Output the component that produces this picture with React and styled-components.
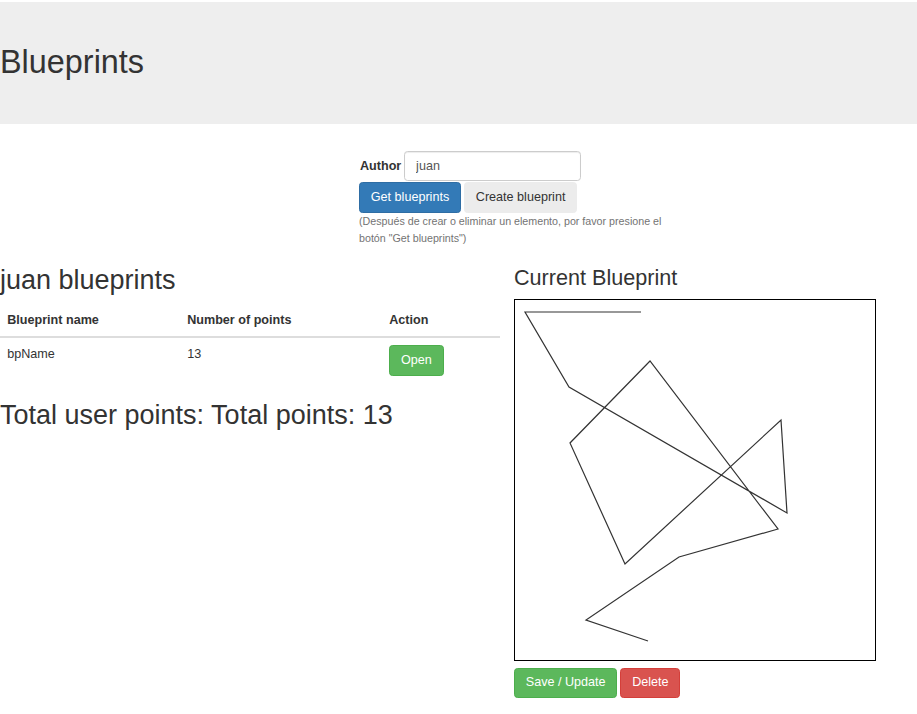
import styled, { createGlobalStyle } from 'styled-components';

const GlobalStyle = createGlobalStyle`
  body {
    margin: 0;
    padding-top: 2px;
    font-family: "Liberation Sans", Arial, sans-serif;
    font-size: 12.6px;
    line-height: 18px;
    color: #333;
    background: #fff;
  }
`;

const Jumbotron = styled.header`
  background: #eee;
  padding: 43px 0 43px;
`;

const Title = styled.h1`
  margin: 0;
  font-size: 32.4px;
  line-height: 1.1;
  font-weight: 500;
`;

const AuthorForm = styled.form`
  margin: 27px 0 0 359px;
  width: 315px;
`;

const InlineRow = styled.div`
  display: flex;
  align-items: center;
  gap: 3px;
  margin-bottom: ${(p) => p.$gap || 0}px;
`;

const Label = styled.label`
  font-weight: bold;
  padding-left: 1px;
`;

const Input = styled.input`
  box-sizing: border-box;
  width: 177px;
  height: 30.6px;
  padding: 5px 10.8px;
  font: inherit;
  color: #555;
  border: 1px solid #ccc;
  border-radius: 3.6px;
  box-shadow: inset 0 1px 1px rgba(0, 0, 0, 0.075);
`;

const variants = {
  primary: { bg: '#337ab7', border: '#2e6da4', color: '#fff' },
  success: { bg: '#5cb85c', border: '#4cae4c', color: '#fff' },
  danger: { bg: '#d9534f', border: '#d43f3a', color: '#fff' },
  light: { bg: '#ececec', border: '#ececec', color: '#333' },
};

const Button = styled.button`
  box-sizing: border-box;
  height: 30.6px;
  padding: 4px 10.8px 6px;
  font: inherit;
  line-height: 18px;
  border-radius: 3.6px;
  cursor: pointer;
  background: ${(p) => variants[p.$variant].bg};
  border: 1px solid ${(p) => variants[p.$variant].border};
  color: ${(p) => variants[p.$variant].color};
`;

const Help = styled.p`
  margin: 0;
  font-size: 10.7px;
  line-height: 17.6px;
  color: #737373;
`;

const Main = styled.main`
  display: flex;
  gap: 14px;
`;

const Column = styled.section`
  width: ${(p) => p.$width}px;
`;

const H2 = styled.h2`
  margin: 18px 0 9px;
  font-size: 27px;
  line-height: 1.1;
  font-weight: 500;
`;

const H3 = styled.h3`
  margin: 18px 0 9px;
  font-size: 21.6px;
  line-height: 1.1;
  font-weight: 500;
`;

const Table = styled.table`
  width: 500px;
  table-layout: fixed;
  border-collapse: collapse;
  margin: -1px 0 18px;
`;

const Th = styled.th`
  box-sizing: border-box;
  width: ${(p) => p.$w}px;
  text-align: left;
  padding: 7.2px;
  border-bottom: 2px solid #ddd;
`;

const Td = styled.td`
  vertical-align: top;
  padding: 7.2px;
`;

const Canvas = styled.svg`
  display: block;
  width: 360px;
  height: 360px;
  border: 1px solid #000;
`;

const Actions = styled.div`
  display: flex;
  gap: 3px;
  margin-top: 7px;
`;

const points = [
  [126, 12], [10, 12], [54, 87], [272, 213], [266, 120], [110, 264],
  [55, 143], [135, 61], [263, 229], [164, 257], [71, 320], [133, 341],
];

export default function App() {
  return (
    <>
      <GlobalStyle />
      <Jumbotron>
        <Title>Blueprints</Title>
      </Jumbotron>

      <AuthorForm onSubmit={(e) => e.preventDefault()}>
        <InlineRow $gap={1}>
          <Label htmlFor="author">Author</Label>
          <Input id="author" defaultValue="juan" />
        </InlineRow>
        <InlineRow>
          <Button type="button" $variant="primary">Get blueprints</Button>
          <Button type="button" $variant="light">Create blueprint</Button>
        </InlineRow>
        <Help>
          (Después de crear o eliminar un elemento, por favor presione el botón "Get blueprints")
        </Help>
      </AuthorForm>

      <Main>
        <Column $width={500}>
          <H2>juan blueprints</H2>
          <Table>
            <thead>
              <tr>
                <Th $w={180}>Blueprint name</Th>
                <Th $w={202}>Number of points</Th>
                <Th $w={118}>Action</Th>
              </tr>
            </thead>
            <tbody>
              <tr>
                <Td>bpName</Td>
                <Td>13</Td>
                <Td>
                  <Button type="button" $variant="success">Open</Button>
                </Td>
              </tr>
            </tbody>
          </Table>
          <H2>Total user points: Total points: 13</H2>
        </Column>

        <Column $width={362}>
          <H3>Current Blueprint</H3>
          <Canvas viewBox="0 0 360 360">
            <polyline
              points={points.map((p) => p.join(',')).join(' ')}
              fill="none"
              stroke="#333"
              strokeWidth="1.2"
            />
          </Canvas>
          <Actions>
            <Button type="button" $variant="success">Save / Update</Button>
            <Button type="button" $variant="danger">Delete</Button>
          </Actions>
        </Column>
      </Main>
    </>
  );
}
